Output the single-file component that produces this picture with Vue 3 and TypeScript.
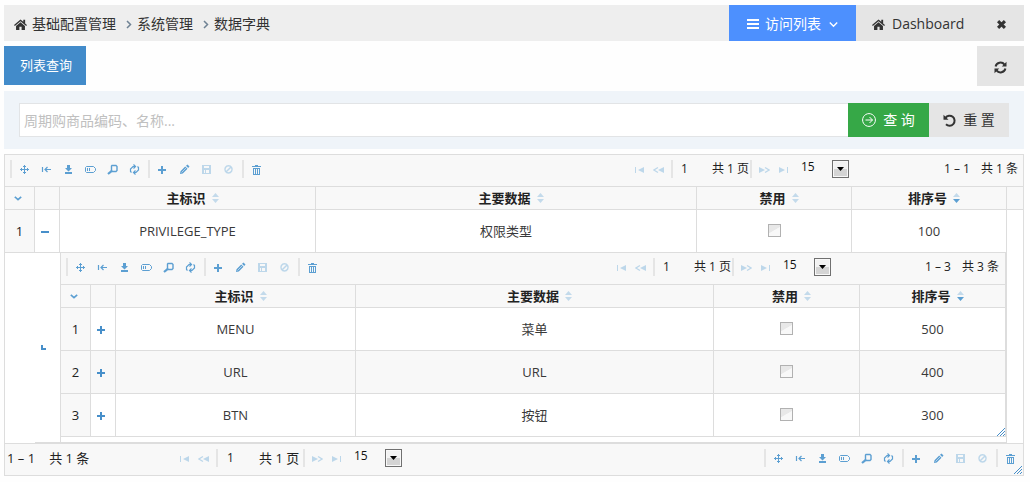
<script setup lang="ts">
import { ref } from 'vue'

interface Tool {
  icon: string
  label: string
  disabled?: boolean
}

interface Entry {
  id: number
  code: string
  name: string
  disabled: boolean
  order: number
}

const toolGroups: Tool[][] = [
  [
    { icon: 'move', label: '移动' },
    { icon: 'collapse', label: '收起' },
    { icon: 'download', label: '导出' },
    { icon: 'tag', label: '标签' },
    { icon: 'search', label: '查找' },
    { icon: 'reload', label: '刷新' },
  ],
  [
    { icon: 'plus', label: '新增' },
    { icon: 'pencil', label: '编辑' },
    { icon: 'save', label: '保存', disabled: true },
    { icon: 'ban', label: '取消', disabled: true },
  ],
  [{ icon: 'trash', label: '删除' }],
]

const columns = [
  { key: 'code', title: '主标识', active: false },
  { key: 'name', title: '主要数据', active: false },
  { key: 'disabled', title: '禁用', active: false },
  { key: 'order', title: '排序号', active: true },
]

const crumbs = ['基础配置管理', '系统管理', '数据字典']
const parent = ref<Entry>({ id: 1, code: 'PRIVILEGE_TYPE', name: '权限类型', disabled: false, order: 100 })
const children = ref<Entry[]>([
  { id: 1, code: 'MENU', name: '菜单', disabled: false, order: 500 },
  { id: 2, code: 'URL', name: 'URL', disabled: false, order: 400 },
  { id: 3, code: 'BTN', name: '按钮', disabled: false, order: 300 },
])
const keyword = ref('')
const page = ref('1')
const childPage = ref('1')
const pageSize = ref('15')
const childPageSize = ref('15')
</script>

<template>
  <svg class="sprite" aria-hidden="true">
    <symbol id="i-home" viewBox="0 0 14 13">
      <path fill="currentColor" d="M7 1 0 7l.9 1L7 2.9 13.1 8l.9-1-2-1.700V1.500h-2v2.100zM7 4 2.200 8v4.500h3.600V9h2.400v3.500h3.600V8z" />
    </symbol>
    <symbol id="i-menu" viewBox="0 0 12 12">
      <path fill="currentColor" d="M0 1h12v2H0zM0 5h12v2H0zM0 9h12v2H0z" />
    </symbol>
    <symbol id="i-down" viewBox="0 0 9 9">
      <path fill="none" stroke="currentColor" stroke-width="1.4" d="m.8 2.5 3.7 3.7 3.7-3.7" />
    </symbol>
    <symbol id="i-right" viewBox="0 0 6 9">
      <path fill="none" stroke="currentColor" stroke-width="1.5" d="m1 1 3.5 3.5L1 8" />
    </symbol>
    <symbol id="i-close" viewBox="0 0 10 10">
      <path fill="none" stroke="currentColor" stroke-width="3.400" d="m1.2 1.2 7.6 7.6M8.800 1.2 1.2 8.800" />
    </symbol>
    <symbol id="i-sync" viewBox="0 0 13 13">
      <path fill="none" stroke="currentColor" stroke-width="2" d="M1.600 5.500A5 5 0 0 1 10.500 3.600M11.400 7.500A5 5 0 0 1 2.500 9.400" />
      <path fill="currentColor" d="M12.500.8v4.700H7.800zM.5 12.200V7.500h4.700z" />
    </symbol>
    <symbol id="i-go" viewBox="0 0 14 14">
      <path fill="none" stroke="currentColor" d="M7 .6a6.400 6.400 0 1 0 .01 0zM3.500 7h7M7.500 4l3 3-3 3" />
    </symbol>
    <symbol id="i-undo" viewBox="0 0 13 13">
      <path fill="none" stroke="currentColor" stroke-width="2" d="M2.500 3.800A5 5 0 1 1 3 10.200" />
      <path fill="currentColor" d="M.5.8v5h5z" />
    </symbol>
    <symbol id="i-move" viewBox="0 0 11 11">
      <path fill="none" stroke="currentColor" d="M5.500 1v9M1 5.500h9M4 2.500h3M4 8.500h3M2.500 4v3M8.500 4v3" />
    </symbol>
    <symbol id="i-collapse" viewBox="0 0 11 11">
      <path fill="none" stroke="currentColor" stroke-width="1.200" d="M1.500 3v5M3.500 5.500H10M6.500 3 4 5.500 6.500 8" />
    </symbol>
    <symbol id="i-download" viewBox="0 0 11 11">
      <path fill="currentColor" d="M4 1h3v3h2L5.500 7.500 2 4h2zM2 8h7v2H2z" />
    </symbol>
    <symbol id="i-tag" viewBox="0 0 11 11">
      <path fill="none" stroke="currentColor" d="M1.500 2.500H8.500L10.500 4.500v2L8.500 8.500H1.500L.5 7.500v-4zM2.500 4v3M4.500 4v3" />
    </symbol>
    <symbol id="i-search" viewBox="0 0 11 11">
      <path fill="none" stroke="currentColor" stroke-width="1.400" d="M5 1.500h4L10 2.500v4L9 7.500H5.500L4.500 6.500V2z" />
      <path fill="none" stroke="currentColor" stroke-width="2.200" d="M4.800 6.800 1 10" />
    </symbol>
    <symbol id="i-reload" viewBox="0 0 11 11">
      <path fill="none" stroke="currentColor" stroke-width="1.200" d="M6.500 10.500 4.500 8.500 6.500 6.500M4.500 8.500H7L9.500 6V3.500L8.500 2.500M4.500.500 6.500 2.500 4.500 4.500M6.500 2.500H4L1.500 5v2.500l1 1" />
    </symbol>
    <symbol id="i-plus" viewBox="0 0 11 11">
      <path fill="currentColor" d="M4 2h2v3h3v2H6v3H4V7H1V5h3z" />
    </symbol>
    <symbol id="i-minus" viewBox="0 0 11 11">
      <path fill="currentColor" d="M1 5h8v2H1z" />
    </symbol>
    <symbol id="i-pencil" viewBox="0 0 11 11">
      <path fill="currentColor" d="m1 10 .5-2.800L6.200 2.500 8.500 4.800 3.800 9.500zM7 1.800 8.500.5 10.500 2.500 9.200 4z" />
      <path stroke="#f8f8f8" stroke-width=".6" d="m2.500 8.500 4.500-4.500" />
    </symbol>
    <symbol id="i-save" viewBox="0 0 11 11">
      <path fill="currentColor" fill-rule="evenodd" d="M1 1h9v9H1zM3 2v2h5V2zM3 6v3h1V6zM5 6v3h3V6z" />
    </symbol>
    <symbol id="i-ban" viewBox="0 0 11 11">
      <path fill="none" stroke="currentColor" stroke-width="1.500" d="M5.500 1.700a3.600 3.600 0 1 0 .01 0zM3 8l5-5" />
    </symbol>
    <symbol id="i-trash" viewBox="0 0 11 11">
      <path fill="currentColor" fill-rule="evenodd" d="M4 1h3v1h3v1H1V2h3zM2 4h7v7H2zM3 5v5h1V5zM5 5v5h1V5zM7 5v5h1V5z" />
    </symbol>
    <symbol id="i-first" viewBox="0 0 11 11">
      <path fill="currentColor" d="M1 3h1v6H1zM10 3v6L4 6z" />
    </symbol>
    <symbol id="i-prev" viewBox="0 0 11 11">
      <path fill="currentColor" d="M11 3v6L5 6z" />
      <path fill="none" stroke="currentColor" stroke-width="1.300" d="m5 3.500-4 2.500 4 2.500" />
    </symbol>
    <symbol id="i-next" viewBox="0 0 11 11">
      <path fill="currentColor" d="M0 3v6l6-3z" />
      <path fill="none" stroke="currentColor" stroke-width="1.300" d="m6 3.500 4 2.500-4 2.500" />
    </symbol>
    <symbol id="i-last" viewBox="0 0 11 11">
      <path fill="currentColor" d="M9 3h1v6H9zM1 3v6L7 6z" />
    </symbol>
    <symbol id="i-caret" viewBox="0 0 7 4">
      <path fill="currentColor" d="M0 0h7L3.500 4z" />
    </symbol>
    <symbol id="i-up" viewBox="0 0 7 4">
      <path fill="currentColor" d="M0 4h7L3.500 0z" />
    </symbol>
    <symbol id="i-expand" viewBox="0 0 8 5">
      <path fill="none" stroke="currentColor" stroke-width="1.600" d="M.8.800 4 3.600 7.200.800" />
    </symbol>
    <symbol id="i-branch" viewBox="0 0 5 5">
      <path fill="currentColor" d="M0 0h2v3h3v2H0z" />
    </symbol>
    <symbol id="i-grip" viewBox="0 0 8 8">
      <path fill="none" stroke="currentColor" d="M0 8 8 0M3 8l5-5M6 8l2-2" />
    </symbol>
  </svg>

  <div class="page">
    <header class="topbar">
      <nav class="crumbs" aria-label="位置">
        <svg class="home"><use href="#i-home" /></svg>
        <template v-for="(crumb, i) in crumbs" :key="crumb">
          <svg v-if="i > 0" class="chevron"><use href="#i-right" /></svg>
          <a href="#">{{ crumb }}</a>
        </template>
      </nav>
      <button class="visits" type="button">
        <svg class="menu"><use href="#i-menu" /></svg>访问列表<svg class="down"><use href="#i-down" /></svg>
      </button>
      <div class="open-tab">
        <a href="#"><svg class="home"><use href="#i-home" /></svg>Dashboard</a>
        <button type="button" aria-label="关闭"><svg class="close"><use href="#i-close" /></svg></button>
      </div>
    </header>

    <div class="tabs">
      <button class="tab" type="button">列表查询</button>
      <button class="refresh" type="button" aria-label="刷新"><svg><use href="#i-sync" /></svg></button>
    </div>

    <form class="search" @submit.prevent>
      <input v-model="keyword" type="text" aria-label="关键字" placeholder="周期购商品编码、名称..." />
      <button class="go" type="submit"><svg><use href="#i-go" /></svg>查 询</button>
      <button class="reset" type="reset"><svg><use href="#i-undo" /></svg>重 置</button>
    </form>

    <section class="grid">
      <div class="toolbar">
        <div class="tools">
          <template v-for="(group, g) in toolGroups" :key="g">
            <span class="sep"></span>
            <button v-for="t in group" :key="t.icon" class="tool" type="button" :aria-label="t.label" :disabled="t.disabled">
              <svg><use :href="'#i-' + t.icon" /></svg>
            </button>
          </template>
        </div>
        <div class="pager">
          <button type="button" aria-label="首页" disabled><svg><use href="#i-first" /></svg></button>
          <button type="button" aria-label="上一页" disabled><svg><use href="#i-prev" /></svg></button>
          <span class="sep"></span>
          <input v-model="page" type="text" aria-label="页码" />
          <span class="total">共 1 页</span>
          <span class="sep"></span>
          <button type="button" aria-label="下一页" disabled><svg><use href="#i-next" /></svg></button>
          <button type="button" aria-label="末页" disabled><svg><use href="#i-last" /></svg></button>
          <span class="size">
            <select v-model="pageSize" aria-label="每页条数"><option>15</option><option>30</option></select>
            <span class="size-box"><svg><use href="#i-caret" /></svg></span>
          </span>
        </div>
        <div class="status"><span>1 – 1</span><span>共 1 条</span></div>
      </div>

      <table>
        <colgroup>
          <col class="c-num" /><col class="c-toggle" /><col class="c-code" /><col /><col class="c-side" /><col class="c-side" /><col class="c-gutter" />
        </colgroup>
        <thead>
          <tr>
            <th><button class="toggle" type="button" aria-label="列菜单"><svg class="expand"><use href="#i-expand" /></svg></button></th>
            <th></th>
            <th v-for="c in columns" :key="c.key">
              <span class="title">{{ c.title }}<span class="sort" :class="{ active: c.active }"><svg><use href="#i-up" /></svg><svg><use href="#i-caret" /></svg></span></span>
            </th>
            <th class="gutter"></th>
          </tr>
        </thead>
        <tbody>
          <tr class="row">
            <td class="num">{{ parent.id }}</td>
            <td><button class="toggle" type="button" aria-label="收起子表"><svg><use href="#i-minus" /></svg></button></td>
            <td>{{ parent.code }}</td>
            <td>{{ parent.name }}</td>
            <td class="check"><input v-model="parent.disabled" type="checkbox" aria-label="禁用" /></td>
            <td>{{ parent.order }}</td>
            <td class="blank" rowspan="2"></td>
          </tr>
          <tr>
            <td class="blank"></td>
            <td class="branch"><svg><use href="#i-branch" /></svg></td>
            <td class="nested" colspan="4">
              <div class="subgrid">
                <div class="toolbar">
                  <div class="tools">
                    <template v-for="(group, g) in toolGroups" :key="g">
                      <span class="sep"></span>
                      <button v-for="t in group" :key="t.icon" class="tool" type="button" :aria-label="t.label" :disabled="t.disabled">
                        <svg><use :href="'#i-' + t.icon" /></svg>
                      </button>
                    </template>
                  </div>
                  <div class="pager">
                    <button type="button" aria-label="首页" disabled><svg><use href="#i-first" /></svg></button>
                    <button type="button" aria-label="上一页" disabled><svg><use href="#i-prev" /></svg></button>
                    <span class="sep"></span>
                    <input v-model="childPage" type="text" aria-label="页码" />
                    <span class="total">共 1 页</span>
                    <span class="sep"></span>
                    <button type="button" aria-label="下一页" disabled><svg><use href="#i-next" /></svg></button>
                    <button type="button" aria-label="末页" disabled><svg><use href="#i-last" /></svg></button>
                    <span class="size">
                      <select v-model="childPageSize" aria-label="每页条数"><option>15</option><option>30</option></select>
                      <span class="size-box"><svg><use href="#i-caret" /></svg></span>
                    </span>
                  </div>
                  <div class="status"><span>1 – 3</span><span>共 3 条</span></div>
                </div>
                <table>
                  <colgroup>
                    <col class="c-num" /><col class="c-toggle" /><col class="c-subcode" /><col /><col class="c-subside" /><col class="c-subside" />
                  </colgroup>
                  <thead>
                    <tr>
                      <th><button class="toggle" type="button" aria-label="列菜单"><svg class="expand"><use href="#i-expand" /></svg></button></th>
                      <th></th>
                      <th v-for="c in columns" :key="c.key">
                        <span class="title">{{ c.title }}<span class="sort" :class="{ active: c.active }"><svg><use href="#i-up" /></svg><svg><use href="#i-caret" /></svg></span></span>
                      </th>
                    </tr>
                  </thead>
                  <tbody>
                    <tr v-for="row in children" :key="row.id" class="row">
                      <td class="num">{{ row.id }}</td>
                      <td><button class="toggle" type="button" aria-label="展开子表"><svg><use href="#i-plus" /></svg></button></td>
                      <td>{{ row.code }}</td>
                      <td>{{ row.name }}</td>
                      <td class="check"><input v-model="row.disabled" type="checkbox" aria-label="禁用" /></td>
                      <td>{{ row.order }}</td>
                    </tr>
                  </tbody>
                </table>
                <svg class="grip"><use href="#i-grip" /></svg>
              </div>
            </td>
          </tr>
        </tbody>
      </table>

      <div class="toolbar footer">
        <div class="status"><span>1 – 1</span><span>共 1 条</span></div>
        <div class="pager">
          <button type="button" aria-label="首页" disabled><svg><use href="#i-first" /></svg></button>
          <button type="button" aria-label="上一页" disabled><svg><use href="#i-prev" /></svg></button>
          <span class="sep"></span>
          <input v-model="page" type="text" aria-label="页码" />
          <span class="total">共 1 页</span>
          <span class="sep"></span>
          <button type="button" aria-label="下一页" disabled><svg><use href="#i-next" /></svg></button>
          <button type="button" aria-label="末页" disabled><svg><use href="#i-last" /></svg></button>
          <span class="size">
            <select v-model="pageSize" aria-label="每页条数"><option>15</option><option>30</option></select>
            <span class="size-box"><svg><use href="#i-caret" /></svg></span>
          </span>
        </div>
        <div class="tools">
          <template v-for="(group, g) in toolGroups" :key="g">
            <span class="sep"></span>
            <button v-for="t in group" :key="t.icon" class="tool" type="button" :aria-label="t.label" :disabled="t.disabled">
              <svg><use :href="'#i-' + t.icon" /></svg>
            </button>
          </template>
        </div>
      </div>
      <svg class="grip"><use href="#i-grip" /></svg>
    </section>
  </div>
</template>

<style>
body {
  background: #fefefe;
}
</style>

<style scoped>
.sprite {
  position: absolute;
  width: 0;
  height: 0;
}
.page {
  padding: 5px 6px 6px 4px;
  font: 13px/20px "Open Sans", "Noto Sans CJK SC", sans-serif;
  color: #393939;
}
.page * {
  box-sizing: border-box;
}
button,
input,
select {
  margin: 0;
  padding: 0;
  border: 0;
  border-radius: 0;
  background: none;
  font: inherit;
  color: inherit;
}
button {
  display: inline-flex;
  align-items: center;
  justify-content: center;
  flex: none;
}
svg {
  display: block;
  flex: none;
}
a {
  color: inherit;
  text-decoration: none;
}

/* top bar */
.topbar {
  display: flex;
  height: 36px;
  background: #eee;
  font-size: 14px;
  color: #333;
}
.crumbs {
  display: flex;
  flex: 1;
  align-items: center;
  padding: 2px 0 0 10px;
}
.home {
  width: 13px;
  height: 13px;
  margin-right: 5px;
}
.chevron {
  width: 6px;
  height: 9px;
  margin: 0 5px 0 10px;
  color: #6f8294;
}
.visits {
  width: 127px;
  padding-top: 2px;
  background: #4d90fe;
  color: #fff;
}
.menu {
  width: 12px;
  height: 12px;
  margin-right: 6px;
}
.down {
  width: 9px;
  height: 9px;
  margin-left: 8px;
}
.open-tab {
  display: flex;
  width: 168px;
  align-items: center;
  justify-content: space-between;
  padding: 2px 18px 0 16px;
  background: #e5e5e5;
}
.open-tab a {
  display: flex;
  align-items: center;
}
.open-tab .home {
  margin-right: 7px;
}
.close {
  width: 9px;
  height: 9px;
}

/* tabs */
.tabs {
  display: flex;
  justify-content: space-between;
  align-items: flex-start;
  margin: 5px 0;
}
.tab {
  height: 39px;
  padding: 0 14px 2px 16px;
  background: #428bca;
  color: #fff;
}
.refresh {
  width: 47px;
  height: 40px;
  padding-top: 2px;
  background: #e5e5e5;
  color: #333;
}
.refresh svg {
  width: 13px;
  height: 13px;
}

/* search */
.search {
  display: flex;
  margin-bottom: 5px;
  padding: 12px 15px;
  background: #eff4f9;
  font-size: 14px;
}
.search input {
  flex: 1;
  min-width: 0;
  height: 34px;
  padding: 0 4px;
  border: 1px solid #e2e4e6;
  border-right: 0;
  background: #fff;
}
.search input::placeholder {
  color: #c0c0c0;
  opacity: 1;
}
.go {
  width: 81px;
  background: #36a847;
  color: #fff;
}
.go svg {
  width: 14px;
  height: 14px;
  margin-right: 7px;
}
.reset {
  width: 80px;
  background: #e5e5e5;
  color: #333;
}
.reset svg {
  width: 13px;
  height: 13px;
  margin-right: 7px;
}

/* grid */
.grid {
  position: relative;
  border: 1px solid #ddd;
  background: #fff;
}
.subgrid {
  position: relative;
  margin-bottom: 5px;
}
.toolbar {
  display: flex;
  align-items: center;
  height: 32px;
  padding-bottom: 3px;
  border-bottom: 1px solid #ddd;
  background: #f8f8f8;
  font-size: 12px;
  color: #222;
}
.subgrid .toolbar {
  border-right: 1px solid #ddd;
}
.tools {
  display: flex;
  flex: 1;
  align-items: center;
  padding-left: 3px;
}
.sep {
  flex: none;
  width: 2px;
  height: 18px;
  margin: 0 2px;
  background: #e5e5e5;
}
.tool {
  width: 22px;
  height: 20px;
  padding: 5px 6px 4px 5px;
  color: #5c9fd2;
}
.tool svg,
.pager button svg {
  width: 11px;
  height: 11px;
}
.tool:disabled,
.pager button:disabled {
  color: #bdd7ea;
}
.pager {
  display: flex;
  align-items: center;
}
.pager button {
  width: 19px;
  height: 20px;
  padding: 5px 4px 4px;
}
.pager .sep {
  margin: 0 3px;
}
.pager input {
  width: 36px;
  height: 20px;
  padding-left: 5px;
}
.total {
  width: 35px;
  white-space: nowrap;
}
.size {
  position: relative;
  display: flex;
  width: 56px;
}
select {
  width: 56px;
  height: 18px;
  padding: 0 0 4px 8px;
  appearance: none;
  color: #111;
  line-height: 14px;
}
.size-box {
  position: absolute;
  top: 0;
  right: 0;
  display: flex;
  width: 17px;
  height: 18px;
  align-items: center;
  justify-content: center;
  border: 1px solid #707070;
  background: linear-gradient(#f2f2f2 50%, #d4d4d4 50%);
  box-shadow: inset 0 0 0 1px #f8f8f8;
  color: #000;
  pointer-events: none;
}
.size-box svg {
  width: 7px;
  height: 4px;
}
.status {
  display: flex;
  width: 174px;
  justify-content: flex-end;
  gap: 11px;
  padding-right: 5px;
  white-space: nowrap;
}
.subgrid .status {
  padding-right: 6px;
}
.footer {
  height: 32px;
  border-top: 1px solid #ddd;
  border-bottom: 0;
}
.footer .status,
.footer .total {
  font-size: 13px;
}
.footer .status {
  width: 170px;
  justify-content: flex-start;
  gap: 14px;
  padding: 0 0 0 2px;
}
.footer .pager input {
  width: 38px;
  padding-left: 6px;
}
.footer .total {
  width: 41px;
}
.footer .tools {
  justify-content: flex-end;
  padding: 0 1px 0 0;
}

table {
  width: 100%;
  table-layout: fixed;
  border-collapse: separate;
  border-spacing: 0;
}
.c-num { width: 30px; }
.c-toggle { width: 25px; }
.c-code { width: 256px; }
.c-side { width: 155px; }
.c-gutter { width: 16px; }
.c-subcode { width: 240px; }
.c-subside { width: 146px; }
th,
td {
  padding: 0;
  border-right: 1px solid #ddd;
  border-bottom: 1px solid #ddd;
  text-align: center;
  vertical-align: middle;
}
th {
  height: 23px;
  background: #f8f8f8;
  color: #222;
  font-weight: bold;
  line-height: 20px;
}
th.gutter {
  border-right: 0;
}
.row > td {
  height: 43px;
}
.row > .check {
  padding-bottom: 5px;
}
.subgrid .row:nth-child(even) > td,
.row > .num {
  background: #f8f8f8;
}
.row > .num {
  color: #222;
}
td.blank,
.row > td.blank {
  border: 0;
}
td.branch {
  border-right: 0;
}
.branch svg {
  width: 5px;
  height: 5px;
  margin-left: 6px;
  color: #478fca;
}
td.nested {
  border-left: 1px solid #ddd;
  vertical-align: top;
}
.title {
  display: flex;
  align-items: center;
  justify-content: center;
  padding-left: 10px;
}
.sort {
  display: flex;
  flex-direction: column;
  gap: 2px;
  margin-left: 6px;
  color: #c3daeb;
}
.sort svg {
  width: 7px;
  height: 4px;
}
.sort.active svg:last-child {
  color: #5c9fd2;
}
.toggle {
  display: flex;
  width: 20px;
  height: 19px;
  padding: 4px 4px 4px 5px;
  color: #478fca;
}
th .toggle {
  width: 25px;
}
.toggle svg {
  width: 11px;
  height: 11px;
}
.toggle .expand {
  width: 8px;
  height: 5px;
  color: #5c9fd2;
}
input[type="checkbox"] {
  width: 13px;
  height: 13px;
  appearance: none;
  border: 1px solid #b1b1b1;
  background: linear-gradient(150deg, #e8e8e8 45%, #f8f8f8 50%);
  vertical-align: middle;
}
.grip {
  position: absolute;
  right: 1px;
  bottom: 1px;
  width: 8px;
  height: 8px;
  color: #478fca;
}
</style>
